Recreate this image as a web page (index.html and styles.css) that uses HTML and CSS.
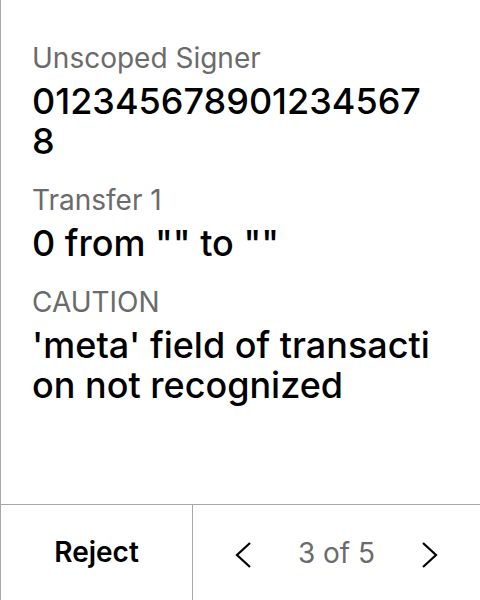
FILE: index.html
```html
<!DOCTYPE html>
<html lang="en">
<head>
<meta charset="utf-8">
<title>Review transaction</title>
<link rel="stylesheet" href="styles.css">
</head>
<body>
<div class="screen">
  <main class="content">
    <section class="field">
      <div class="label">Unscoped Signer</div>
      <div class="value">012345678901234567 8</div>
    </section>
    <section class="field">
      <div class="label">Transfer 1</div>
      <div class="value">0 from "" to ""</div>
    </section>
    <section class="field">
      <div class="label">CAUTION</div>
      <div class="value">'meta' field of transaction not recognized</div>
    </section>
  </main>
  <footer class="footer">
    <div class="reject">Reject</div>
    <div class="nav">
      <svg class="chev" width="16" height="26" viewBox="0 0 16 26"><path d="M15 1 L2 13 L15 25" fill="none" stroke="#000" stroke-width="2.2"/></svg>
      <span class="pages">3 of 5</span>
      <svg class="chev" width="16" height="26" viewBox="0 0 16 26"><path d="M1 1 L14 13 L1 25" fill="none" stroke="#000" stroke-width="2.2"/></svg>
    </div>
  </footer>
</div>
</body>
</html>
```
FILE: styles.css
```css
html, body {
  margin: 0;
  padding: 0;
  background: #fff;
}
.screen {
  width: 480px;
  height: 600px;
  box-sizing: border-box;
  border-left: 1px solid #a8a8a8;
  display: flex;
  flex-direction: column;
  font-family: Inter, "Noto Sans", sans-serif;
  color: #000;
}
.content {
  flex: 1;
  padding: 40px 44px 0 31px;
  display: flex;
  flex-direction: column;
  gap: 21px;
}
.field {
  display: flex;
  flex-direction: column;
  gap: 5px;
}
.label {
  font-size: 28px;
  line-height: 36px;
  color: #6b6b6b;
}
.value {
  font-size: 36px;
  line-height: 40px;
  font-weight: 500;
  word-break: break-all;
}
.footer {
  height: 95px;
  border-top: 1px solid #a8a8a8;
  display: flex;
}
.reject {
  width: 191px;
  display: flex;
  align-items: center;
  justify-content: center;
  font-size: 28px;
  font-weight: 600;
  padding-bottom: 2px;
}
.nav {
  flex: 1;
  border-left: 1px solid #a8a8a8;
  display: flex;
  align-items: center;
  justify-content: center;
  gap: 47px;
}
.chev {
  display: block;
  margin-top: 4px;
}
.pages {
  font-size: 28px;
  color: #6b6b6b;
}
```
